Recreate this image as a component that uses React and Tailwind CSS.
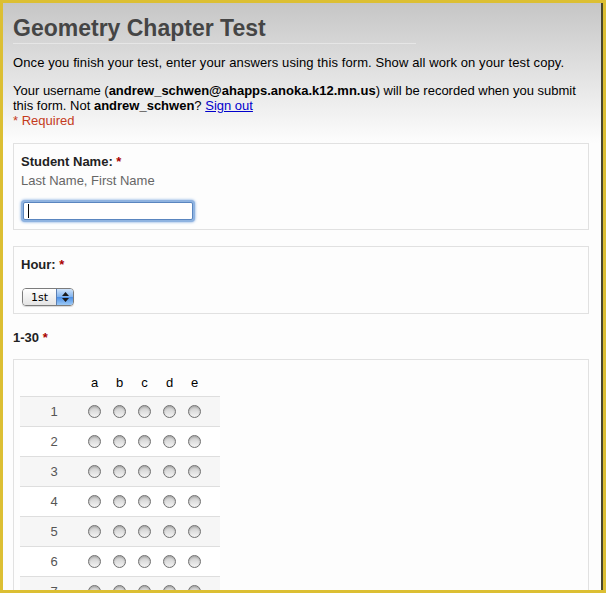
import React from "react";

const letters = ["a", "b", "c", "d", "e"];
const rows = Array.from({ length: 30 }, (_, i) => i + 1);

const Radio = () => (
  <span className="block w-[13px] h-[13px] rounded-full border border-[#707070] bg-[linear-gradient(to_bottom,#c9c9c9,#f4f4f4)] shadow-[inset_0_1px_2px_rgba(0,0,0,0.22)]" />
);

const Asterisk = () => <span className="text-[#aa0000]">*</span>;

const App = () => {
  return (
    <div className="w-[606px] h-[593px] bg-[#dcbf33] pt-[3px] pl-[3px] pr-[3px] pb-[3px]">
      <div className="h-full overflow-hidden border-r-2 border-[#4a482c] bg-[linear-gradient(to_bottom,#c6c6c6_0px,#fdfdfd_140px)] pl-[10px] pr-[12px] font-['Liberation_Sans',Arial,sans-serif] text-[13px] leading-[15px] text-black">
        {/* Header */}
        <h1 className="w-[403px] pt-[10px] text-[23px] leading-[30px] font-bold text-[#454545] border-b border-[#e6e6e6]">
          Geometry Chapter Test
        </h1>
        <p className="mt-[11px] tracking-[0.1px]">
          Once you finish your test, enter your answers using this form. Show
          all work on your test copy.
        </p>
        <p className="mt-[13px]">
          Your username (<b>andrew_schwen@ahapps.anoka.k12.mn.us</b>) will be
          recorded when you submit
          <br />
          this form. Not <b>andrew_schwen</b>?{" "}
          <a href="#" className="text-[#0000cc] underline">
            Sign out
          </a>
        </p>
        <p className="text-[#c43b1d]">* Required</p>

        {/* Student name */}
        <div className="mt-[15px] border border-[#e1e1e1] bg-[#fdfdfd] pt-[10px] pl-[7px] pb-[7px]">
          <div className="font-bold text-[#222]">
            Student Name: <Asterisk />
          </div>
          <div className="mt-[4px] text-[#666]">Last Name, First Name</div>
          <div className="mt-[12px] w-[174px] h-[22px] rounded-[4px] bg-[#8fb3e0] p-[2px] shadow-[0_0_3px_#6f9fdc]">
            <div className="h-full rounded-[2px] border border-[#5a86c0] bg-white flex items-center pl-[4px]">
              <span className="block w-px h-[14px] bg-black" />
            </div>
          </div>
        </div>

        {/* Hour */}
        <div className="mt-[16px] border border-[#e1e1e1] bg-[#fdfdfd] pt-[10px] pl-[7px] pb-[7px]">
          <div className="font-bold text-[#222]">
            Hour: <Asterisk />
          </div>
          <div className="mt-[16px] ml-[1px] flex w-[52px] h-[18px] rounded-[4px] border border-[#7c7c7c] overflow-hidden shadow-[0_1px_1px_rgba(0,0,0,0.15)]">
            <div className="flex-1 flex items-center pl-[8px] bg-[linear-gradient(to_bottom,#ffffff,#e4e4e4)] font-['DejaVu_Sans',sans-serif] text-[11px] text-black">
              1st
            </div>
            <div className="w-[17px] flex flex-col items-center justify-center gap-[2px] border-l border-[#5b7fb3] bg-[linear-gradient(to_bottom,#cfe3fa,#7fb2ee_50%,#4b8fe6_51%,#9cc9f6)]">
              <svg width="7" height="4" viewBox="0 0 7 4">
                <path d="M3.5 0L7 4H0z" fill="#1a1a1a" />
              </svg>
              <svg width="7" height="4" viewBox="0 0 7 4">
                <path d="M0 0h7L3.5 4z" fill="#1a1a1a" />
              </svg>
            </div>
          </div>
        </div>

        {/* 1-30 */}
        <div className="mt-[16px] font-bold text-[#222]">
          1-30 <Asterisk />
        </div>

        <div className="mt-[14px] border border-[#e1e1e1] bg-[#fdfdfd] pt-[6px] pl-[6px] pb-[20px]">
          <div className="w-[200px]">
            <div className="flex h-[31px] items-end pb-[6px] border-b border-[#dedede]">
              <div className="w-[62px]" />
              {letters.map((l) => (
                <div key={l} className="w-[25px] text-center">
                  {l}
                </div>
              ))}
            </div>
            {rows.map((n) => (
              <div
                key={n}
                className={`flex h-[30px] items-center border-b border-[#dedede] ${
                  n % 2 === 1 ? "bg-[#f6f6f6]" : "bg-white"
                }`}
              >
                <div className="w-[62px] pl-[6px] text-center text-[#555]">{n}</div>
                {letters.map((l) => (
                  <div key={l} className="w-[25px] flex justify-center">
                    <Radio />
                  </div>
                ))}
              </div>
            ))}
          </div>
        </div>
      </div>
    </div>
  );
};

export default App;
